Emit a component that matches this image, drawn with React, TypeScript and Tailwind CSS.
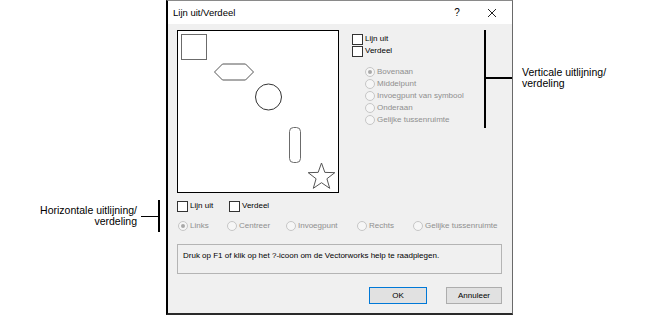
function Checkbox({ label }: { label: string }) {
  return (
    <div className="flex h-[12px] items-center gap-[2px]">
      <span className="h-[11px] w-[11px] border border-[#333333] bg-white" />
      <span className="text-[8px] leading-none text-black">{label}</span>
    </div>
  );
}

function Radio({ label, checked, className }: { label: string; checked?: boolean; className?: string }) {
  return (
    <div className={`flex h-[12px] items-center gap-[2px] ${className ?? ""}`}>
      <span className="flex h-[10px] w-[10px] items-center justify-center rounded-full border border-[#c6c6c6] bg-[#f6f6f6]">
        {checked && <span className="h-[4px] w-[4px] rounded-full bg-[#a9a9a9]" />}
      </span>
      <span className="text-[8px] leading-none whitespace-nowrap text-[#8f8f8f]">{label}</span>
    </div>
  );
}

function Preview() {
  return (
    <div className="h-[163px] w-[162px] border border-black bg-white">
      <svg width="160" height="161" viewBox="0 0 160 161" fill="none" strokeWidth="1">
        <rect x="3.5" y="3.5" width="25" height="25" stroke="#6b6b6b" />
        <polygon points="36.5,41 44.5,33 67.5,33 75.5,41 67.5,49 44.5,49" stroke="#555555" />
        <circle cx="90.5" cy="66" r="13" stroke="#333333" />
        <rect x="111.5" y="96.5" width="11" height="35" rx="4" stroke="#6b6b6b" />
        <polygon
          points="143.5,132 146.85,141.39 156.81,141.67 148.92,147.76 151.73,157.33 143.5,151.7 135.27,157.33 138.08,147.76 130.19,141.67 140.15,141.39"
          stroke="#555555"
        />
      </svg>
    </div>
  );
}

export default function App() {
  return (
    <div className="flex h-[320px] w-[652px] overflow-hidden bg-white font-['Liberation_Sans',Arial,sans-serif] text-black">
      {/* left annotation */}
      <div className="w-[166px] shrink-0 pt-[200px]">
        <div className="flex h-[32px] items-center justify-end pr-[6px]">
          <div className="text-right text-[10.5px] leading-[11px]">
            Horizontale uitlijning/
            <br />
            verdeling
          </div>
          <div className="ml-[4px] h-px w-[17px] bg-black" />
          <div className="h-[32px] w-[2px] bg-black" />
        </div>
      </div>

      {/* dialog */}
      <div className="flex h-[315px] w-[347px] shrink-0 flex-col border-t border-r border-b-2 border-l-2 border-t-[#8a8a8a] border-r-[#6a6a6a] border-b-[#2a2a2a] border-l-black">
        <div className="flex h-[23px] items-center bg-white pl-[5px]">
          <span className="flex-1 text-[9.5px] leading-none">Lijn uit/Verdeel</span>
          <span className="w-[16px] text-center text-[10px] leading-none">?</span>
          <span className="mr-[12px] ml-[19px] flex w-[16px] justify-center">
            <svg width="10" height="10" viewBox="0 0 10 10" stroke="#222" strokeWidth="1">
              <path d="M1 1 L9 9 M9 1 L1 9" />
            </svg>
          </span>
        </div>

        <div className="flex flex-1 flex-col bg-[#f0f0f0] pt-[6px] pl-[9px]">
          <div className="flex items-start">
            <Preview />
            <div className="ml-[13px] flex w-[132px] flex-col pt-[3px]">
              <Checkbox label="Lijn uit" />
              <Checkbox label="Verdeel" />
              <div className="mt-[9px] ml-[13px] flex flex-col">
                <Radio label="Bovenaan" checked />
                <Radio label="Middelpunt" />
                <Radio label="Invoegpunt van symbool" />
                <Radio label="Onderaan" />
                <Radio label="Gelijke tussenruimte" />
              </div>
            </div>
            <div className="flex h-[98px] items-start">
              <div className="h-full w-[2px] bg-black" />
              <div className="mt-[47px] h-[1.5px] w-[26px] bg-black" />
            </div>
          </div>

          <div className="mt-[7px] flex">
            <div className="w-[52px]">
              <Checkbox label="Lijn uit" />
            </div>
            <Checkbox label="Verdeel" />
          </div>

          <div className="mt-[8px] ml-[1px] flex">
            <Radio label="Links" checked className="w-[49px]" />
            <Radio label="Centreer" className="w-[59px]" />
            <Radio label="Invoegpunt" className="w-[71px]" />
            <Radio label="Rechts" className="w-[56px]" />
            <Radio label="Gelijke tussenruimte" />
          </div>

          <div className="mt-[12px] h-[30px] w-[325px] border border-[#b4b4b4] pt-[7px] pl-[5px] text-[8px] leading-none">
            Druk op F1 of klik op het ?-icoon om de Vectorworks help te raadplegen.
          </div>

          <div className="mt-[13px] flex w-[325px] justify-end gap-[19px]">
            <button className="flex h-[17px] w-[58px] items-center justify-center border border-[#0078d7] bg-[#e1e1e1] text-[8px] leading-none">
              OK
            </button>
            <button className="flex h-[17px] w-[56px] items-center justify-center border border-[#adadad] bg-[#e1e1e1] text-[8px] leading-none">
              Annuleer
            </button>
          </div>
        </div>
      </div>

      {/* right annotation */}
      <div className="flex-1 pt-[67px] pl-[9px] text-[10.5px] leading-[11px]">
        Verticale uitlijning/
        <br />
        verdeling
      </div>
    </div>
  );
}
